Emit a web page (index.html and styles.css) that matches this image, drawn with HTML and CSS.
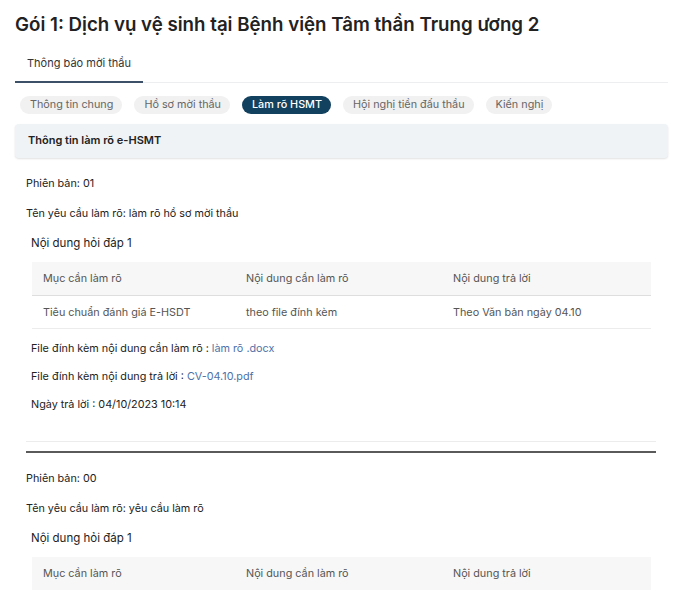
FILE: index.html
```html
<!DOCTYPE html>
<html>
<head>
<meta charset="UTF-8">
<title>Làm rõ HSMT</title>
<link rel="stylesheet" href="styles.css">
</head>
<body>
	<h1 class="title">Gói 1: Dịch vụ vệ sinh tại Bệnh viện Tâm thần Trung ương 2</h1>

	<div class="tabs">
		<a class="tab active">Thông báo mời thầu</a>
	</div>

	<div class="pills">
		<span class="pill">Thông tin chung</span>
		<span class="pill">Hồ sơ mời thầu</span>
		<span class="pill selected">Làm rõ HSMT</span>
		<span class="pill">Hội nghị tiền đấu thầu</span>
		<span class="pill">Kiến nghị</span>
	</div>

	<div class="card-head">Thông tin làm rõ e-HSMT</div>

	<div class="version">
		<p class="line">Phiên bản: 01</p>
		<p class="line">Tên yêu cầu làm rõ: làm rõ hồ sơ mời thầu</p>
		<p class="qa">Nội dung hỏi đáp 1</p>
		<table class="grid">
			<tr>
				<th class="c1">Mục cần làm rõ</th>
				<th class="c2">Nội dung cần làm rõ</th>
				<th>Nội dung trả lời</th>
			</tr>
			<tr>
				<td>Tiêu chuẩn đánh giá E-HSDT</td>
				<td>theo file đính kèm</td>
				<td>Theo Văn bản ngày 04.10</td>
			</tr>
		</table>
		<p class="meta">File đính kèm nội dung cần làm rõ : <a class="file">làm rõ .docx</a></p>
		<p class="meta">File đính kèm nội dung trả lời : <a class="file">CV-04.10.pdf</a></p>
		<p class="meta">Ngày trả lời : 04/10/2023 10:14</p>
		<div class="sep-light"></div>
		<div class="sep-dark"></div>
	</div>

	<div class="version">
		<p class="line">Phiên bản: 00</p>
		<p class="line">Tên yêu cầu làm rõ: yêu cầu làm rõ</p>
		<p class="qa">Nội dung hỏi đáp 1</p>
		<table class="grid">
			<tr>
				<th class="c1">Mục cần làm rõ</th>
				<th class="c2">Nội dung cần làm rõ</th>
				<th>Nội dung trả lời</th>
			</tr>
		</table>
	</div>
</body>
</html>
```

FILE: styles.css
```css
body {
	margin: 0;
	padding: 0 12px 0 15px;
	font-family: Inter, "Noto Sans", sans-serif;
	color: #222;
	background: #fff;
	overflow: hidden;
}

.title {
	margin: 0;
	padding-top: 10px;
	height: 30px;
	font-size: 18.7px;
	font-weight: 600;
	line-height: 30px;
	color: #222;
}

.tabs {
	margin-top: 10px;
	border-bottom: 1px solid #eceef0;
	display: flex;
}

.tab {
	display: block;
	padding: 6px 12px 11px 12px;
	font-size: 11px;
	line-height: 14px;
	color: #333;
	border-bottom: 2px solid #3c5068;
	margin-bottom: -1px;
}

.pills {
	display: flex;
	gap: 12px;
	margin-top: 13px;
	padding-left: 5px;
}

.pill {
	display: block;
	height: 18px;
	line-height: 18px;
	padding: 0 9px 0 10px;
	border-radius: 9px;
	background: #f1f1f1;
	color: #666;
	font-size: 10.8px;
}

.pill.selected {
	background: #12405f;
	color: #fff;
	font-weight: 500;
}

.card-head {
	margin-top: 10px;
	height: 34px;
	line-height: 32px;
	padding-left: 13px;
	background: #f0f3f6;
	border-radius: 4px;
	box-shadow: 0 1px 2px rgba(0, 0, 0, 0.12);
	font-size: 11px;
	font-weight: 600;
	color: #222;
}

.version {
	padding: 0 12px 0 11px;
}

.line {
	margin: 0;
	height: 30px;
	line-height: 30px;
	font-size: 10.8px;
	color: #222;
}

.version .line:first-child {
	margin-top: 11px;
}

.qa {
	margin: 0;
	padding-left: 5px;
	height: 29px;
	line-height: 29px;
	font-size: 11.5px;
	color: #222;
}

.grid {
	margin: 4px 5px 0 6px;
	width: calc(100% - 11px);
	border-collapse: collapse;
	font-size: 10.8px;
}

.grid th {
	background: #f7f7f7;
	font-weight: normal;
	text-align: left;
	color: #555;
	height: 33px;
	padding: 0 0 0 11px;
	border-bottom: 1px solid #dedede;
}

.grid th.c1 {
	width: 192px;
}

.grid th.c2 {
	width: 196px;
}

.grid td {
	height: 32px;
	padding: 0 0 0 11px;
	color: #555;
	border-bottom: 1px solid #ececec;
}

.meta {
	margin: 0;
	padding-left: 5px;
	height: 28px;
	line-height: 28px;
	font-size: 10.8px;
	color: #222;
}

.version .grid + .meta {
	margin-top: 6px;
}

.file {
	color: #4d72a8;
	text-decoration: none;
}

.sep-light {
	margin-top: 22px;
	border-top: 1px solid #ececec;
}

.sep-dark {
	margin-top: 9px;
	border-top: 2px solid #5a5a5a;
}
```
